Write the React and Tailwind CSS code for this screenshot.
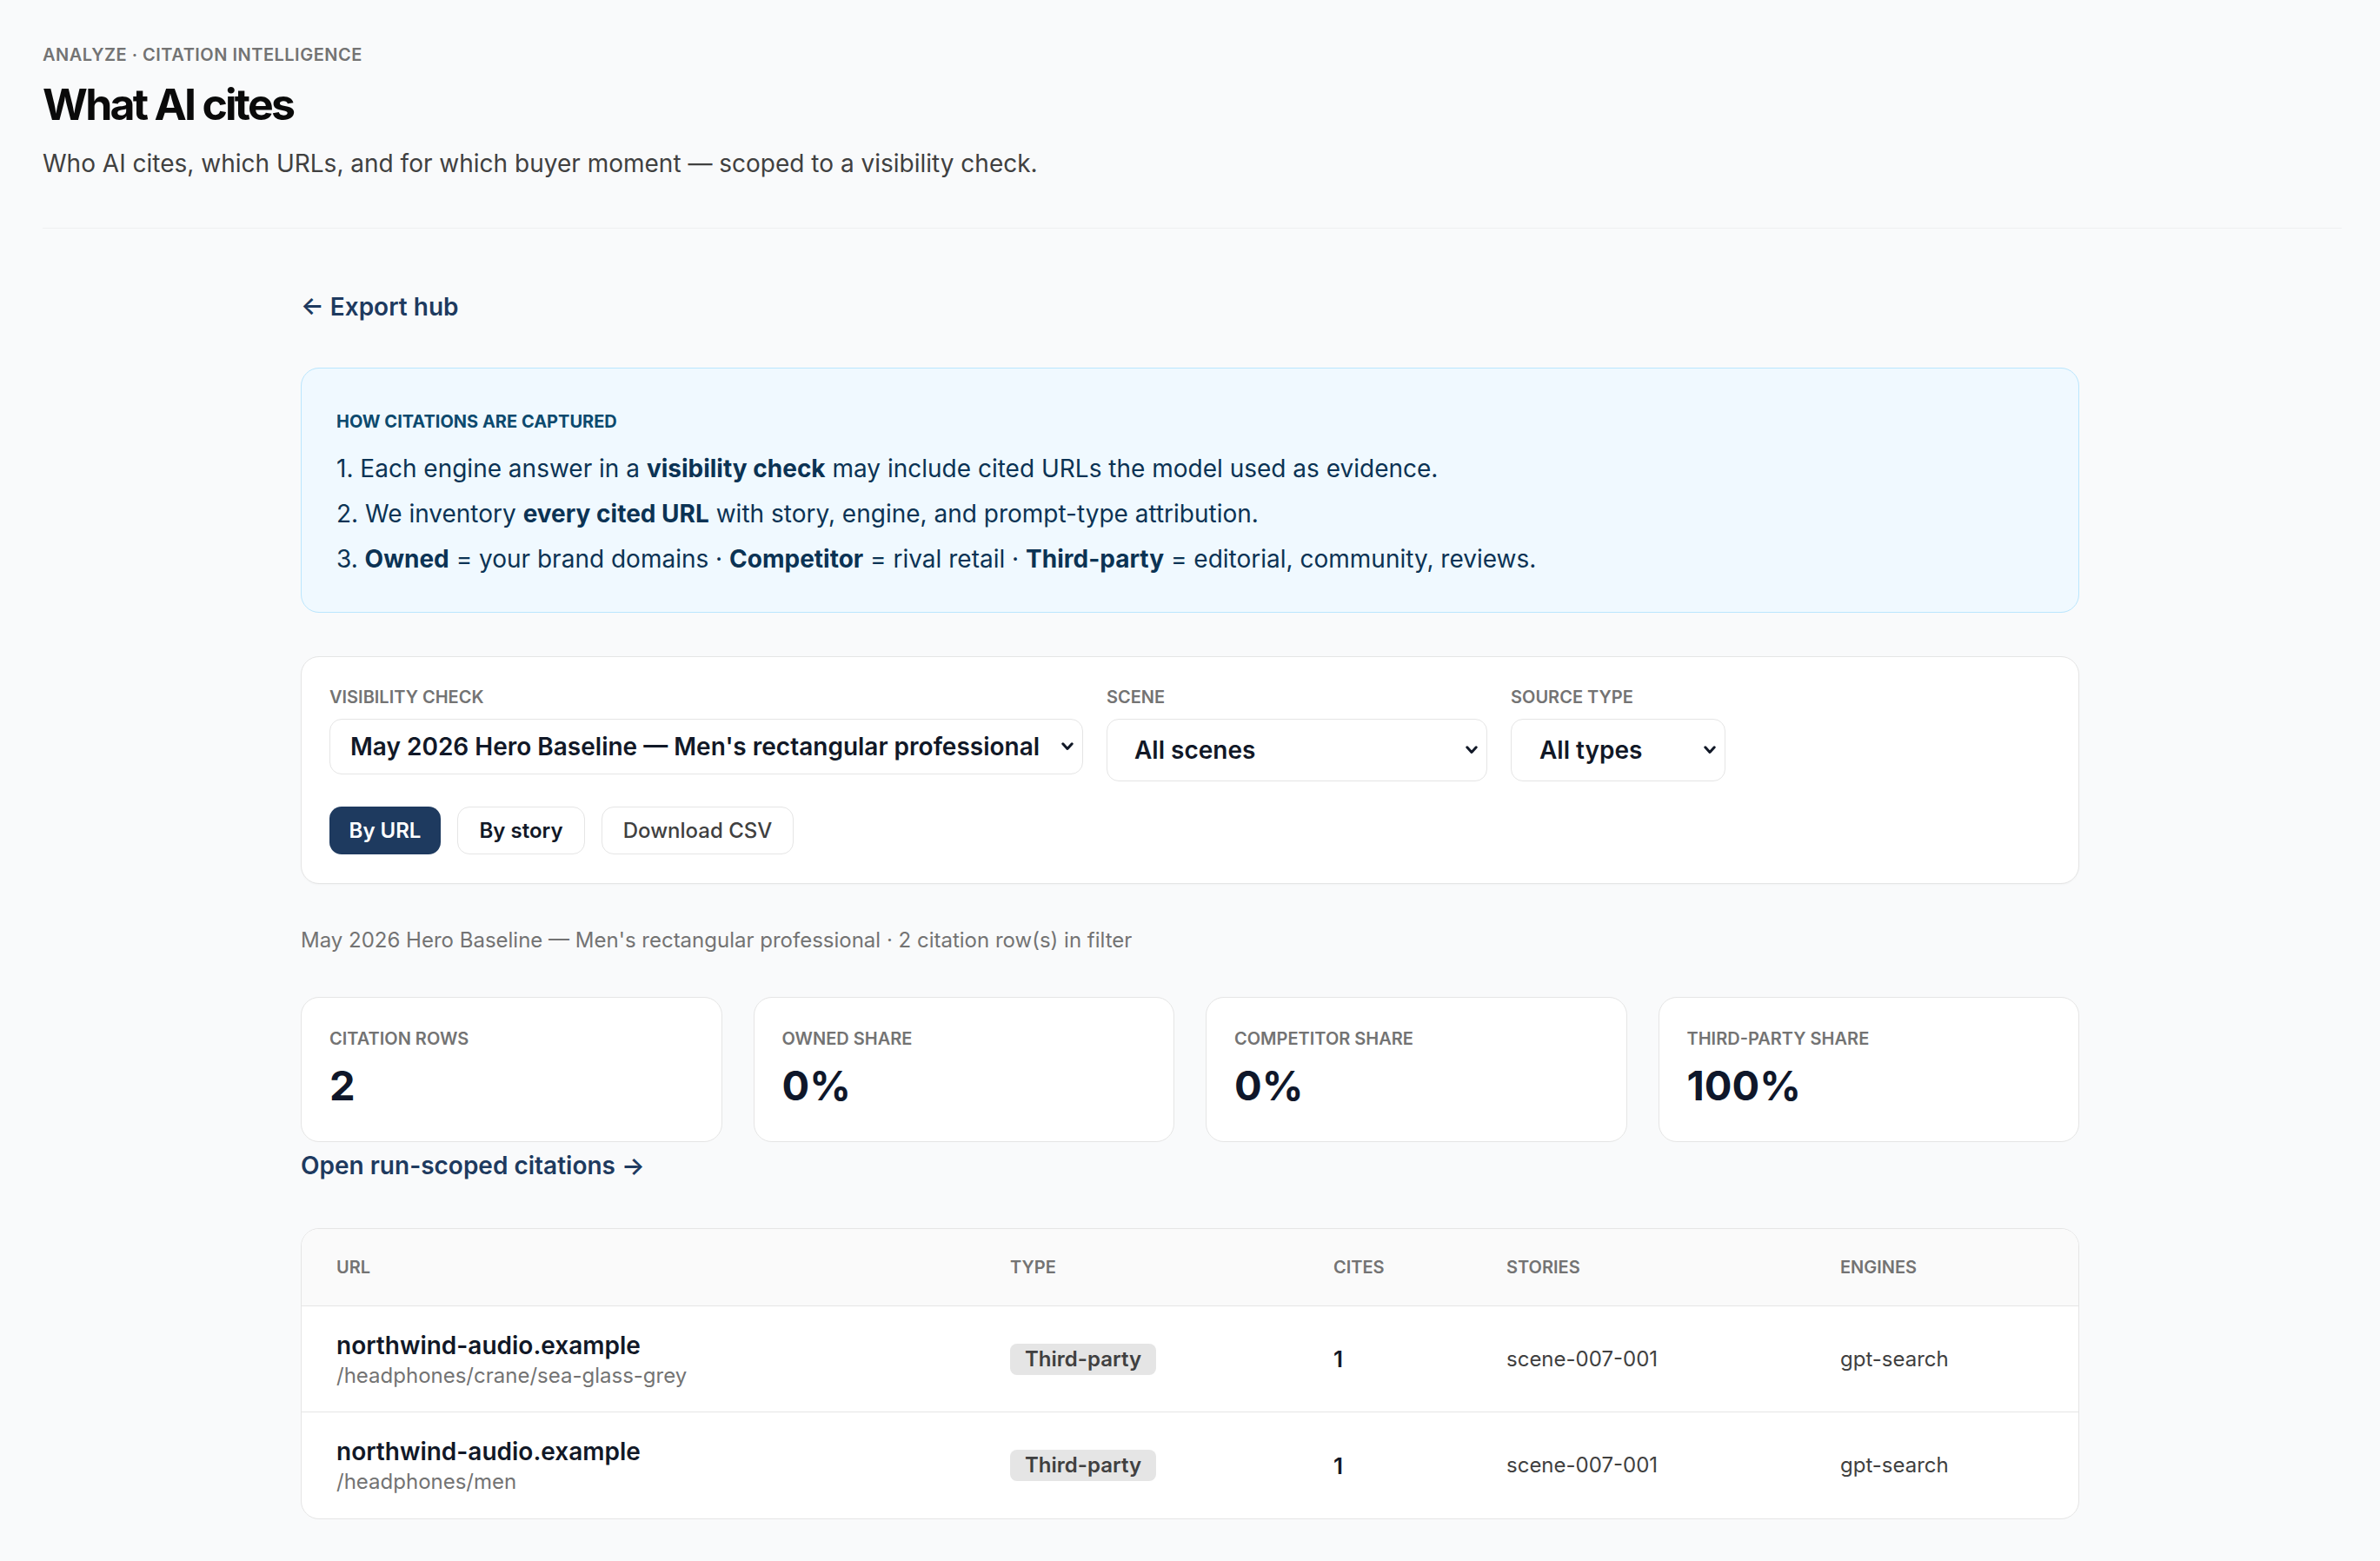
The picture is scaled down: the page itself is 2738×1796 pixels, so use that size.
import { useState } from 'react';

const rows = [
  { domain: 'northwind-audio.example', path: '/headphones/crane/sea-glass-grey', type: 'Third-party', cites: 1, stories: 'scene-007-001', engines: 'gpt-search' },
  { domain: 'northwind-audio.example', path: '/headphones/men', type: 'Third-party', cites: 1, stories: 'scene-007-001', engines: 'gpt-search' },
];

const stats = [
  { label: 'Citation rows', value: '2' },
  { label: 'Owned share', value: '0%' },
  { label: 'Competitor share', value: '0%' },
  { label: 'Third-party share', value: '100%' },
];

function Chevron() {
  return (
    <svg width="14" height="10" viewBox="0 0 14 10" fill="none" className="pointer-events-none absolute right-[11px] top-1/2 -translate-y-1/2 text-[#111827]">
      <path d="M1.8 1.8 L7 7.5 L12.2 1.8" stroke="currentColor" strokeWidth="3" strokeLinecap="round" strokeLinejoin="round" />
    </svg>
  );
}

export default function App() {
  const [view, setView] = useState('url');

  return (
    <div className="min-h-screen bg-[#f9fafb] font-['Inter',sans-serif] text-[#111827] pb-[60px]">
      {/* Page header */}
      <div className="pl-[49px] pr-[44px]">
        <div className="border-b border-[#eeeff1] pt-[49px] pb-[54px]">
          <div className="text-[20px] leading-[28px] font-semibold uppercase tracking-[0.025em] text-[#737373]">
            Analyze · Citation intelligence
          </div>
          <h1 className="mt-[14px] text-[50px] leading-[58px] font-bold tracking-[-0.055em] text-[#0a0a0a]">What AI cites</h1>
          <p className="mt-[19px] text-[28px] leading-[40px] text-[#404040]">
            Who AI cites, which URLs, and for which buyer moment — scoped to a visibility check.
          </p>
        </div>
      </div>

      <div className="w-[2046px] mx-auto pt-[70px]">
        <a href="#" className="block text-[28px] leading-[40px] font-semibold text-[#1e3a5f]">← Export hub</a>

        {/* How citations are captured */}
        <div className="mt-[50px] rounded-[21px] border border-[#bae6fd] bg-[#f0f9ff] px-[40px] pt-[47px] pb-[41px]">
          <div className="text-[20px] leading-[28px] font-bold uppercase text-[#0c4a6e]">How citations are captured</div>
          <ol className="mt-[21px] flex flex-col gap-[13px] text-[28px] leading-[39px] text-[#0b3354]">
            <li>1. Each engine answer in a <b className="font-bold">visibility check</b> may include cited URLs the model used as evidence.</li>
            <li>2. We inventory <b className="font-bold">every cited URL</b> with story, engine, and prompt-type attribution.</li>
            <li>3. <b className="font-bold">Owned</b> = your brand domains · <b className="font-bold">Competitor</b> = rival retail · <b className="font-bold">Third-party</b> = editorial, community, reviews.</li>
          </ol>
        </div>

        {/* Filters */}
        <div className="mt-[50px] rounded-[21px] border border-[#e5e5e5] bg-white px-[32px] pt-[32px] pb-[33px] shadow-[0_1px_2px_rgba(0,0,0,0.03)]">
          <div className="flex items-start gap-[27px]">
            <label className="flex flex-col">
              <span className="text-[20px] leading-[28px] font-semibold uppercase text-[#737373]">Visibility check</span>
              <div className="relative mt-[11px]">
                <select className="appearance-none w-[867px] h-[64px] rounded-[14px] border border-[#e5e5e5] bg-white pl-[23px] pr-[44px] text-[28px] font-semibold text-[#111827] outline-none">
                  <option>May 2026 Hero Baseline — Men's rectangular professional</option>
                </select>
                <Chevron />
              </div>
            </label>
            <label className="flex flex-col">
              <span className="text-[20px] leading-[28px] font-semibold uppercase text-[#737373]">Scene</span>
              <div className="relative mt-[11px]">
                <select className="appearance-none w-[438px] h-[72px] rounded-[14px] border border-[#e5e5e5] bg-white pl-[31px] pr-[44px] text-[28px] font-semibold text-[#111827] outline-none">
                  <option>All scenes</option>
                </select>
                <Chevron />
              </div>
            </label>
            <label className="flex flex-col">
              <span className="text-[20px] leading-[28px] font-semibold uppercase text-[#737373]">Source type</span>
              <div className="relative mt-[11px]">
                <select className="appearance-none w-[247px] h-[72px] rounded-[14px] border border-[#e5e5e5] bg-white pl-[32px] pr-[44px] text-[28px] font-semibold text-[#111827] outline-none">
                  <option>All types</option>
                </select>
                <Chevron />
              </div>
            </label>
          </div>

          <div className="mt-[29px] flex items-center gap-[19px]">
            <button
              onClick={() => setView('url')}
              className={view === 'url'
                ? 'h-[55px] w-[128px] rounded-[14px] bg-[#1e3a5f] text-[24px] font-semibold text-white'
                : 'h-[55px] w-[128px] rounded-[14px] border border-[#e5e5e5] bg-white text-[24px] font-semibold text-[#111827]'}
            >
              By URL
            </button>
            <button
              onClick={() => setView('story')}
              className={view === 'story'
                ? 'h-[55px] w-[147px] rounded-[14px] bg-[#1e3a5f] text-[24px] font-semibold text-white'
                : 'h-[55px] w-[147px] rounded-[14px] border border-[#e5e5e5] bg-white text-[24px] font-semibold text-[#111827]'}
            >
              By story
            </button>
            <button className="h-[55px] w-[221px] rounded-[14px] border border-[#e5e5e5] bg-white text-[24px] font-medium text-[#404040]">
              Download CSV
            </button>
          </div>
        </div>

        <p className="mt-[47px] text-[24px] leading-[36px] text-[#737373]">
          May 2026 Hero Baseline — Men's rectangular professional · 2 citation row(s) in filter
        </p>

        {/* Stats */}
        <div className="mt-[47px] grid grid-cols-4 gap-[36px]">
          {stats.map((s) => (
            <div key={s.label} className="rounded-[21px] border border-[#e5e5e5] bg-white px-[32px] pt-[33px] pb-[39px]">
              <div className="text-[20px] leading-[28px] font-semibold uppercase text-[#737373]">{s.label}</div>
              <div className="mt-[14px] text-[47px] leading-[51px] font-bold text-[#0f172a]">{s.value}</div>
            </div>
          ))}
        </div>

        <a href="#" className="mt-[7px] block text-[28px] leading-[40px] font-semibold text-[#1e3a5f]">Open run-scoped citations →</a>

        {/* Table */}
        <div className="mt-[52px] overflow-hidden rounded-[21px] border border-[#e5e5e5] bg-white">
          <div className="grid h-[89px] grid-cols-[775px_372px_199px_384px_1fr] items-center border-b border-[#e5e5e5] bg-[#fafafa] pl-[40px] text-[20px] font-semibold uppercase text-[#737373]">
            <div>URL</div>
            <div>Type</div>
            <div>Cites</div>
            <div>Stories</div>
            <div>Engines</div>
          </div>
          {rows.map((r, i) => (
            <div
              key={i}
              className={'grid h-[122px] grid-cols-[775px_372px_199px_384px_1fr] items-center pl-[40px] ' + (i < rows.length - 1 ? 'border-b border-[#e5e5e5]' : '')}
            >
              <div className="pt-[2px]">
                <div className="text-[28px] leading-[36px] font-semibold text-[#111827]">{r.domain}</div>
                <div className="text-[24px] leading-[34px] text-[#737373]">{r.path}</div>
              </div>
              <div>
                <span className="inline-flex h-[36px] items-center rounded-[8px] bg-[#e5e5e5] px-[17px] text-[24px] font-semibold text-[#404040]">{r.type}</span>
              </div>
              <div className="text-[26px] font-semibold text-[#111827]">{r.cites}</div>
              <div className="text-[24px] text-[#404040]">{r.stories}</div>
              <div className="text-[24px] text-[#404040]">{r.engines}</div>
            </div>
          ))}
        </div>
      </div>
    </div>
  );
}
